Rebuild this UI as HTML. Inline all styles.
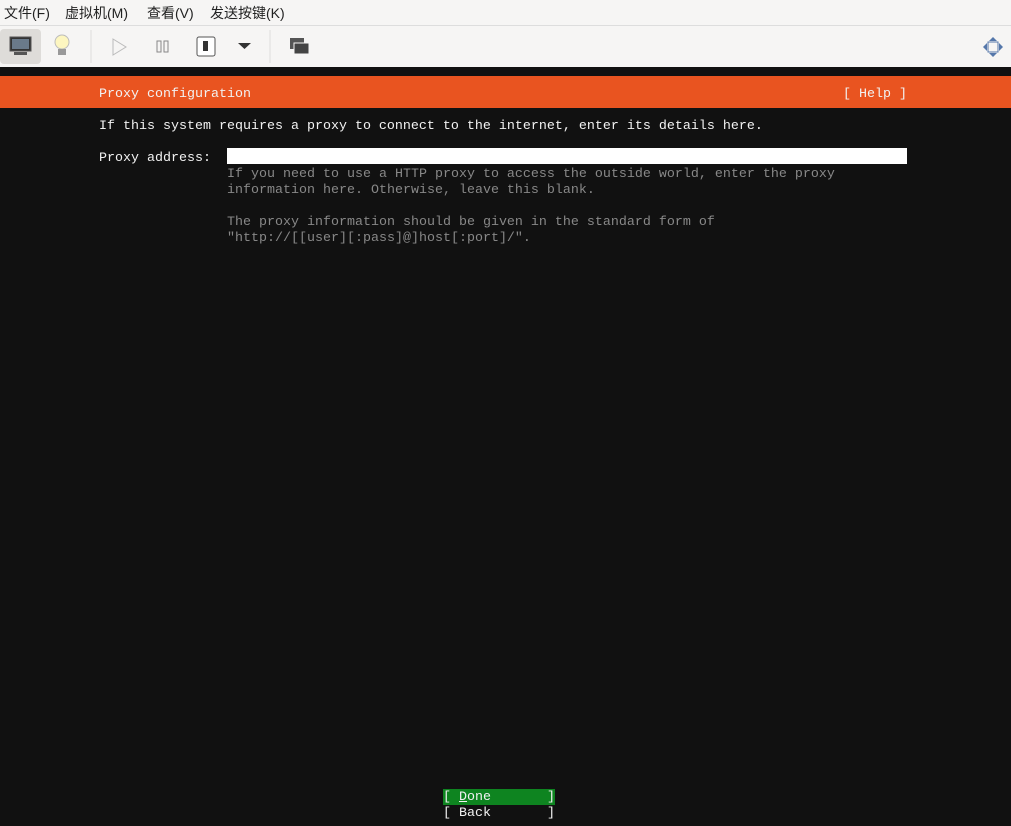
<html><head><style>
body{margin:0;width:1011px;height:826px;background:#111;overflow:hidden;position:relative}
.menu{position:absolute;top:0;left:0;width:1011px;height:25px;background:#f6f5f4;font:14px "Liberation Sans","Noto Sans CJK SC",sans-serif;color:#222;border-bottom:1px solid #ddd}
.menu span{position:absolute;top:3px}
.tb{position:absolute;top:26px;left:0;width:1011px;height:41px;background:#f6f5f4}
.m{position:absolute;font:13.33px/16px "Liberation Mono",monospace;color:#f2f2f2;white-space:pre}
.g{color:#888}
</style></head><body>
<div class="menu"><span style="left:4px">文件(F)</span><span style="left:65px">虚拟机(M)</span><span style="left:147px">查看(V)</span><span style="left:210px">发送按键(K)</span></div>
<div class="tb">
<div style="position:absolute;left:0;top:3px;width:41px;height:35px;background:#dedcd9;border-radius:4px"></div>
<svg width="1011" height="41" style="position:absolute;left:0;top:0">
<rect x="10" y="11" width="21" height="14" fill="#333" stroke="#555"/><rect x="12" y="13" width="17" height="10" fill="#6a7a8a"/><rect x="14" y="26" width="13" height="3" fill="#555"/>
<circle cx="62" cy="16" r="7" fill="#fdf6c0" stroke="#bbb"/><rect x="58" y="23" width="8" height="6" fill="#999"/>
<line x1="91" y1="4" x2="91" y2="37" stroke="#ddd"/>
<path d="M113 13 L126 21 L113 29Z" fill="none" stroke="#bbb"/>
<rect x="157" y="15" width="4" height="11" fill="none" stroke="#888"/><rect x="164" y="15" width="4" height="11" fill="none" stroke="#888"/>
<rect x="197" y="11" width="18" height="19" rx="2" fill="#fff" stroke="#555"/><rect x="203" y="15" width="5" height="10" fill="#333"/>
<path d="M238 17 L251 17 L244.5 23Z" fill="#333"/>
<line x1="270" y1="4" x2="270" y2="37" stroke="#ddd"/>
<rect x="290" y="12" width="14" height="11" fill="#555"/><rect x="294" y="17" width="15" height="11" fill="#444" stroke="#f6f5f4"/>
<path d="M993 11 l-4 4 h8z M993 31 l-4 -4 h8z M983 21 l4 -4 v8z M1003 21 l-4 -4 v8z" fill="#5577aa"/><rect x="988" y="16" width="10" height="10" fill="none" stroke="#5577aa"/>
</svg></div>
<div style="position:absolute;top:76px;left:0;width:1011px;height:32px;background:#e95420"></div>
<div class="m" style="left:99px;top:87px">Proxy configuration</div>
<div class="m" style="left:843px;top:87px">[ Help ]</div>
<div class="m" style="left:99px;top:119px">If this system requires a proxy to connect to the internet, enter its details here.</div>
<div class="m" style="left:99px;top:151px">Proxy address:</div>
<div style="position:absolute;left:227px;top:148px;width:680px;height:16px;background:#fff"></div>
<div class="m g" style="left:227px;top:167px">If you need to use a HTTP proxy to access the outside world, enter the proxy
information here. Otherwise, leave this blank.

The proxy information should be given in the standard form of
"http://[[user][:pass]@]host[:port]/".</div>
<div style="position:absolute;left:443px;top:789px;width:112px;height:16px;background:#0e8420"></div>
<div class="m" style="left:443px;top:790px">[ <u>D</u>one       ]
[ Back       ]</div>
</body></html>
